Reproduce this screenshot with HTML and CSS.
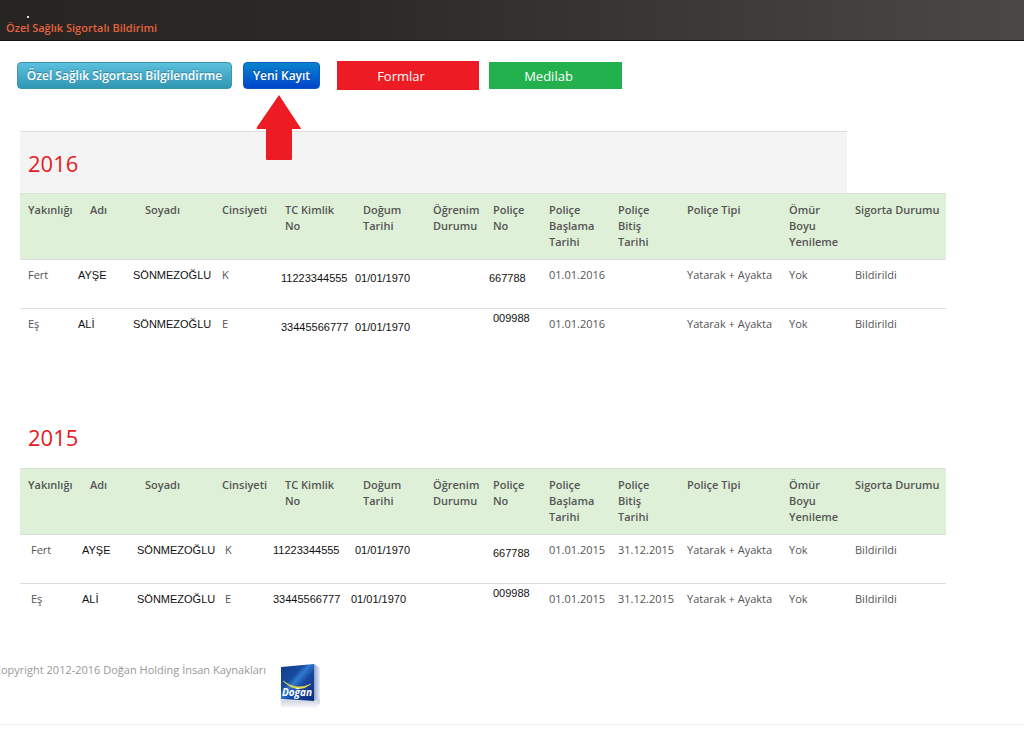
FILE: index.html
```html
<!DOCTYPE html>
<html lang="tr">
<head>
<meta charset="utf-8">
<title>Özel Sağlık Sigortalı Bildirimi</title>
<link rel="stylesheet" href="styles.css">
</head>
<body>
<header class="topbar">
  <span class="dot"></span>
  <h1 class="page-title">Özel Sağlık Sigortalı Bildirimi</h1>
</header>
<nav class="actions">
  <button type="button" class="btn btn-info">Özel Sağlık Sigortası Bilgilendirme</button>
  <div class="pointed">
    <button type="button" class="btn btn-primary">Yeni Kayıt</button>
    <svg class="arrow" viewBox="0 0 46 67" width="46" height="67" aria-hidden="true"><path d="M23 1 44 33Q46 35 44 35H36V65Q36 66 35 66H11Q10 66 10 65V35H2Q0 35 1 33Z" fill="#ed1c24"/></svg>
  </div>
  <button type="button" class="flat flat-red">Formlar</button>
  <button type="button" class="flat flat-green">Medilab</button>
</nav>
<main class="content">
  <table class="policies">
    <colgroup><col class="w-rel"><col class="w-name"><col class="w-surname"><col class="w-sex"><col class="w-id"><col class="w-birth"><col class="w-edu"><col class="w-no"><col class="w-start"><col class="w-end"><col class="w-type"><col class="w-renew"><col class="w-status"></colgroup>
    <thead>
      <tr class="year"><th colspan="12" class="shaded">2016</th><td></td></tr>
      <tr class="heads"><th>Yakınlığı</th><th class="wide">Adı</th><th class="wide">Soyadı</th><th>Cinsiyeti</th><th class="wide">TC Kimlik No</th><th class="wide">Doğum Tarihi</th><th>Öğrenim Durumu</th><th class="wide">Poliçe No</th><th>Poliçe Başlama Tarihi</th><th>Poliçe<br>Bitiş<br>Tarihi</th><th>Poliçe Tipi</th><th>Ömür Boyu Yenileme</th><th>Sigorta Durumu</th></tr>
    </thead>
    <tbody>
      <tr><td>Fert</td><td class="typed tight">AYŞE</td><td class="typed tight">SÖNMEZOĞLU</td><td>K</td><td class="typed inset low">11223344555</td><td class="typed low">01/01/1970</td><td></td><td class="typed inset low">667788</td><td>01.01.2016</td><td></td><td>Yatarak + Ayakta</td><td>Yok</td><td>Bildirildi</td></tr>
      <tr><td>Eş</td><td class="typed tight">ALİ</td><td class="typed tight">SÖNMEZOĞLU</td><td>E</td><td class="typed inset low">33445566777</td><td class="typed low">01/01/1970</td><td></td><td class="typed wide high">009988</td><td>01.01.2016</td><td></td><td>Yatarak + Ayakta</td><td>Yok</td><td>Bildirildi</td></tr>
    </tbody>
  </table>
  <table class="policies">
    <colgroup><col class="w-rel"><col class="w-name"><col class="w-surname"><col class="w-sex"><col class="w-id"><col class="w-birth"><col class="w-edu"><col class="w-no"><col class="w-start"><col class="w-end"><col class="w-type"><col class="w-renew"><col class="w-status"></colgroup>
    <thead>
      <tr class="year"><th colspan="12">2015</th><td></td></tr>
      <tr class="heads"><th>Yakınlığı</th><th class="wide">Adı</th><th class="wide">Soyadı</th><th>Cinsiyeti</th><th class="wide">TC Kimlik No</th><th class="wide">Doğum Tarihi</th><th>Öğrenim Durumu</th><th class="wide">Poliçe No</th><th>Poliçe Başlama Tarihi</th><th>Poliçe<br>Bitiş<br>Tarihi</th><th>Poliçe Tipi</th><th>Ömür Boyu Yenileme</th><th>Sigorta Durumu</th></tr>
    </thead>
    <tbody>
      <tr><td class="nudged">Fert</td><td class="typed">AYŞE</td><td class="typed">SÖNMEZOĞLU</td><td class="nudged">K</td><td class="typed tight">11223344555</td><td class="typed">01/01/1970</td><td></td><td class="typed wide low">667788</td><td>01.01.2015</td><td>31.12.2015</td><td>Yatarak + Ayakta</td><td>Yok</td><td>Bildirildi</td></tr>
      <tr><td class="nudged">Eş</td><td class="typed">ALİ</td><td class="typed">SÖNMEZOĞLU</td><td class="nudged">E</td><td class="typed tight">33445566777</td><td class="typed tight">01/01/1970</td><td></td><td class="typed wide high">009988</td><td>01.01.2015</td><td>31.12.2015</td><td>Yatarak + Ayakta</td><td>Yok</td><td>Bildirildi</td></tr>
    </tbody>
  </table>
</main>
<footer class="footer">
  <p class="copyright">Copyright 2012-2016 Doğan Holding İnsan Kaynakları</p>
  <svg class="logo" viewBox="0 0 44 48" width="44" height="48" role="img" aria-label="Doğan">
    <defs>
      <linearGradient id="face" x1="0" y1="0" x2="1" y2="1"><stop offset="0" stop-color="#123a86"/><stop offset=".35" stop-color="#174b9f"/><stop offset=".45" stop-color="#2f7ad0"/><stop offset=".6" stop-color="#1748a0"/><stop offset="1" stop-color="#0c2b78"/></linearGradient>
      <linearGradient id="side" x1="0" x2="1"><stop offset="0" stop-color="#8fa3cc"/><stop offset="1" stop-color="#eef1f8"/></linearGradient>
      <linearGradient id="fade" x1="0" y1="0" x2="0" y2="1"><stop offset="0" stop-color="#c9cedb"/><stop offset="1" stop-color="#fff"/></linearGradient>
    </defs>
    <path d="M34 2 40 6V37L34 39Z" fill="url(#side)"/>
    <path d="M1 38 34 39 40 37V42L34 47 1 45Z" fill="url(#fade)"/>
    <path d="M1 5 34 2V39L1 37Z" fill="url(#face)"/>
    <path d="M3 19Q17 33 31 22Q17 29 3 19Z" fill="#e8d44d" stroke="#e8d44d" stroke-width=".5"/>
    <text x="2" y="34" class="logo-text">Doğan</text>
  </svg>
</footer>
</body>
</html>
```
FILE: styles.css
```css
* { box-sizing: border-box; }
body {
  margin: 0;
  background: #fff;
  color: #555;
  font: 11px/16px "Trebuchet MS", "Open Sans", sans-serif;
  overflow-x: hidden;
}
.topbar {
  height: 41px;
  padding: 16px 6px 0;
  background: linear-gradient(90deg, #272422 0%, #2c2927 35%, #474341 90%, #4b4745 100%);
  border-bottom: 1px solid #151312;
}
.dot { display: block; width: 2px; height: 2px; margin: 0 0 2px 21px; background: #ddd; }
.page-title { margin: 0; font-size: 11px; line-height: 16px; font-weight: 600; color: #e4633f; }
.actions { display: flex; align-items: center; padding: 20px 17px 0; }
button { font-family: inherit; color: #fff; cursor: pointer; white-space: nowrap; }
.btn {
  height: 27px;
  padding: 0;
  border-radius: 4px;
  font-size: 12px;
  line-height: 16px;
  font-weight: 600;
  text-shadow: 0 -1px 0 rgba(0, 0, 0, .25);
}
.btn-info { width: 215px; border: 1px solid #3a96b0; background: linear-gradient(#5bc0de, #2f96b4); }
.btn-primary { width: 77px; border: 1px solid #0a5cc4; background: linear-gradient(#0a84cc, #0044cc); }
.pointed { position: relative; display: flex; margin: 0 17px 0 11px; }
.arrow { position: absolute; left: 13px; top: 32px; }
.flat { border: 0; font-size: 13px; line-height: 18px; }
.flat-red { width: 142px; height: 29px; margin-right: 10px; padding: 0 14px 0 0; background: #ed1c24; }
.flat-green { width: 133px; height: 27px; padding: 0 14px 0 0; background: #22b14c; }
.content { display: grid; gap: 49px; padding: 41px 78px 0 20px; }
.policies { width: 100%; table-layout: fixed; border-collapse: separate; border-spacing: 0; }
.w-rel { width: 54px; }
.w-name { width: 55px; }
.w-surname { width: 85px; }
.w-sex { width: 55px; }
.w-id { width: 78px; }
.w-birth { width: 78px; }
.w-edu { width: 52px; }
.w-no { width: 64px; }
.w-start { width: 69px; }
.w-end { width: 69px; }
.w-type { width: 102px; }
.w-renew { width: 66px; }
.w-status { width: 99px; }
.policies th, .policies td { padding: 8px 0 8px 8px; text-align: left; vertical-align: top; }
.year th { height: 62px; font-size: 22px; line-height: 32px; font-weight: 400; color: #e31b23; vertical-align: middle; }
.year .shaded { background: #f4f4f4; border-top: 1px solid #ddd; }
.heads th { height: 66px; background: #dff0d8; border-top: 1px solid #d9e2d6; font-weight: 600; }
.policies tbody td { height: 49px; padding-top: 7px; border-top: 1px solid #ddd; white-space: nowrap; }
.policies .typed { font-family: "Liberation Sans", Arial, sans-serif; color: #111; }
.policies .nudged { padding-left: 11px; }
.policies .tight { padding-left: 4px; }
.policies .inset { padding-left: 12px; }
.policies .wide { padding-left: 16px; }
.policies tbody .low { padding-top: 10px; }
.policies tbody .high { padding-top: 1px; }
.footer {
  display: flex;
  align-items: flex-start;
  gap: 14px;
  height: 93px;
  padding-top: 30px;
  border-bottom: 1px solid #eee;
}
.copyright { margin: 0 0 0 -6px; color: #999; }
.logo-text { font: italic 700 10px "Open Sans", sans-serif; fill: #fff; }
```
